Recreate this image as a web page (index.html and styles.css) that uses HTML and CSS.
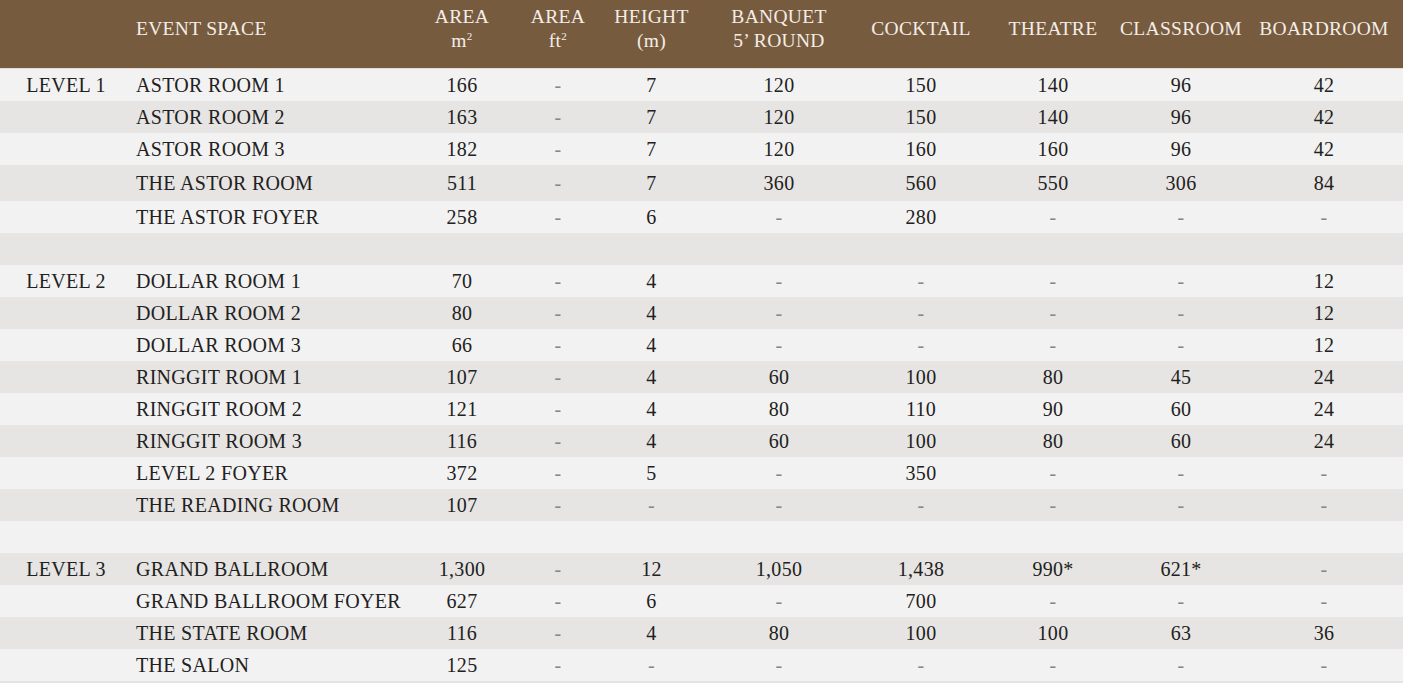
FILE: index.html
```html
<!DOCTYPE html>
<html lang="en">
<head>
<meta charset="utf-8">
<title>Event Spaces</title>
<link rel="stylesheet" href="styles.css">
</head>
<body>
<div class="table">
  <div class="row head">
    <div class="c lvl"></div>
    <div class="c name">EVENT SPACE</div>
    <div class="c"><span>AREA<br>m<sup>2</sup></span></div>
    <div class="c"><span>AREA<br>ft<sup>2</sup></span></div>
    <div class="c"><span>HEIGHT<br>(m)</span></div>
    <div class="c"><span>BANQUET<br>5’ ROUND</span></div>
    <div class="c">COCKTAIL</div>
    <div class="c">THEATRE</div>
    <div class="c">CLASSROOM</div>
    <div class="c">BOARDROOM</div>
  </div>

  <div class="row light"><div class="c lvl">LEVEL 1</div><div class="c name">ASTOR ROOM 1</div><div class="c">166</div><div class="c d">-</div><div class="c">7</div><div class="c">120</div><div class="c">150</div><div class="c">140</div><div class="c">96</div><div class="c">42</div></div>
  <div class="row dark"><div class="c lvl"></div><div class="c name">ASTOR ROOM 2</div><div class="c">163</div><div class="c d">-</div><div class="c">7</div><div class="c">120</div><div class="c">150</div><div class="c">140</div><div class="c">96</div><div class="c">42</div></div>
  <div class="row light"><div class="c lvl"></div><div class="c name">ASTOR ROOM 3</div><div class="c">182</div><div class="c d">-</div><div class="c">7</div><div class="c">120</div><div class="c">160</div><div class="c">160</div><div class="c">96</div><div class="c">42</div></div>
  <div class="row dark tall"><div class="c lvl"></div><div class="c name">THE ASTOR ROOM</div><div class="c">511</div><div class="c d">-</div><div class="c">7</div><div class="c">360</div><div class="c">560</div><div class="c">550</div><div class="c">306</div><div class="c">84</div></div>
  <div class="row light"><div class="c lvl"></div><div class="c name">THE ASTOR FOYER</div><div class="c">258</div><div class="c d">-</div><div class="c">6</div><div class="c d">-</div><div class="c">280</div><div class="c d">-</div><div class="c d">-</div><div class="c d">-</div></div>
  <div class="row dark"></div>

  <div class="row light"><div class="c lvl">LEVEL 2</div><div class="c name">DOLLAR ROOM 1</div><div class="c">70</div><div class="c d">-</div><div class="c">4</div><div class="c d">-</div><div class="c d">-</div><div class="c d">-</div><div class="c d">-</div><div class="c">12</div></div>
  <div class="row dark"><div class="c lvl"></div><div class="c name">DOLLAR ROOM 2</div><div class="c">80</div><div class="c d">-</div><div class="c">4</div><div class="c d">-</div><div class="c d">-</div><div class="c d">-</div><div class="c d">-</div><div class="c">12</div></div>
  <div class="row light"><div class="c lvl"></div><div class="c name">DOLLAR ROOM 3</div><div class="c">66</div><div class="c d">-</div><div class="c">4</div><div class="c d">-</div><div class="c d">-</div><div class="c d">-</div><div class="c d">-</div><div class="c">12</div></div>
  <div class="row dark"><div class="c lvl"></div><div class="c name">RINGGIT ROOM 1</div><div class="c">107</div><div class="c d">-</div><div class="c">4</div><div class="c">60</div><div class="c">100</div><div class="c">80</div><div class="c">45</div><div class="c">24</div></div>
  <div class="row light"><div class="c lvl"></div><div class="c name">RINGGIT ROOM 2</div><div class="c">121</div><div class="c d">-</div><div class="c">4</div><div class="c">80</div><div class="c">110</div><div class="c">90</div><div class="c">60</div><div class="c">24</div></div>
  <div class="row dark"><div class="c lvl"></div><div class="c name">RINGGIT ROOM 3</div><div class="c">116</div><div class="c d">-</div><div class="c">4</div><div class="c">60</div><div class="c">100</div><div class="c">80</div><div class="c">60</div><div class="c">24</div></div>
  <div class="row light"><div class="c lvl"></div><div class="c name">LEVEL 2 FOYER</div><div class="c">372</div><div class="c d">-</div><div class="c">5</div><div class="c d">-</div><div class="c">350</div><div class="c d">-</div><div class="c d">-</div><div class="c d">-</div></div>
  <div class="row dark"><div class="c lvl"></div><div class="c name">THE READING ROOM</div><div class="c">107</div><div class="c d">-</div><div class="c d">-</div><div class="c d">-</div><div class="c d">-</div><div class="c d">-</div><div class="c d">-</div><div class="c d">-</div></div>
  <div class="row light"></div>

  <div class="row dark"><div class="c lvl">LEVEL 3</div><div class="c name">GRAND BALLROOM</div><div class="c">1,300</div><div class="c d">-</div><div class="c">12</div><div class="c">1,050</div><div class="c">1,438</div><div class="c">990*</div><div class="c">621*</div><div class="c d">-</div></div>
  <div class="row light"><div class="c lvl"></div><div class="c name">GRAND BALLROOM FOYER</div><div class="c">627</div><div class="c d">-</div><div class="c">6</div><div class="c d">-</div><div class="c">700</div><div class="c d">-</div><div class="c d">-</div><div class="c d">-</div></div>
  <div class="row dark"><div class="c lvl"></div><div class="c name">THE STATE ROOM</div><div class="c">116</div><div class="c d">-</div><div class="c">4</div><div class="c">80</div><div class="c">100</div><div class="c">100</div><div class="c">63</div><div class="c">36</div></div>
  <div class="row light"><div class="c lvl"></div><div class="c name">THE SALON</div><div class="c">125</div><div class="c d">-</div><div class="c d">-</div><div class="c d">-</div><div class="c d">-</div><div class="c d">-</div><div class="c d">-</div><div class="c d">-</div></div>
</div>
</body>
</html>
```

FILE: styles.css
```css
html, body {
  margin: 0;
  padding: 0;
}
body {
  background: #e4e3e1;
  font-family: "Liberation Serif", "Times New Roman", serif;
  color: #222120;
  width: 1403px;
  height: 683px;
  overflow: hidden;
}
.table {
  display: flex;
  flex-direction: column;
}
.row {
  display: grid;
  grid-template-columns: 130px 269px 126px 66px 121px 134px 150px 114px 142px 144px;
  height: 32px;
  align-items: center;
  font-size: 20px;
  letter-spacing: 0.3px;
}
.row.tall {
  height: 36px;
}
.light {
  background: #f3f2f2;
}
.dark {
  background: #e6e5e3;
}
.head {
  height: 68px;
  background: #775b3f;
  color: #f3ede6;
  font-size: 19.5px;
  line-height: 24px;
  border-bottom: 1px solid #e6ddd2;
}
.c {
  display: flex;
  justify-content: center;
  text-align: center;
  white-space: nowrap;
}
.c.name {
  justify-content: flex-start;
  padding-left: 6px;
}
.c.lvl {
  justify-content: center;
  padding-left: 2px;
}
.c.d {
  color: #8a8886;
}
.head .c {
  padding-bottom: 11px;
}
.head .c.name {
  padding-bottom: 11px;
}
sup {
  font-size: 11px;
  line-height: 0;
  vertical-align: 7px;
}
```
